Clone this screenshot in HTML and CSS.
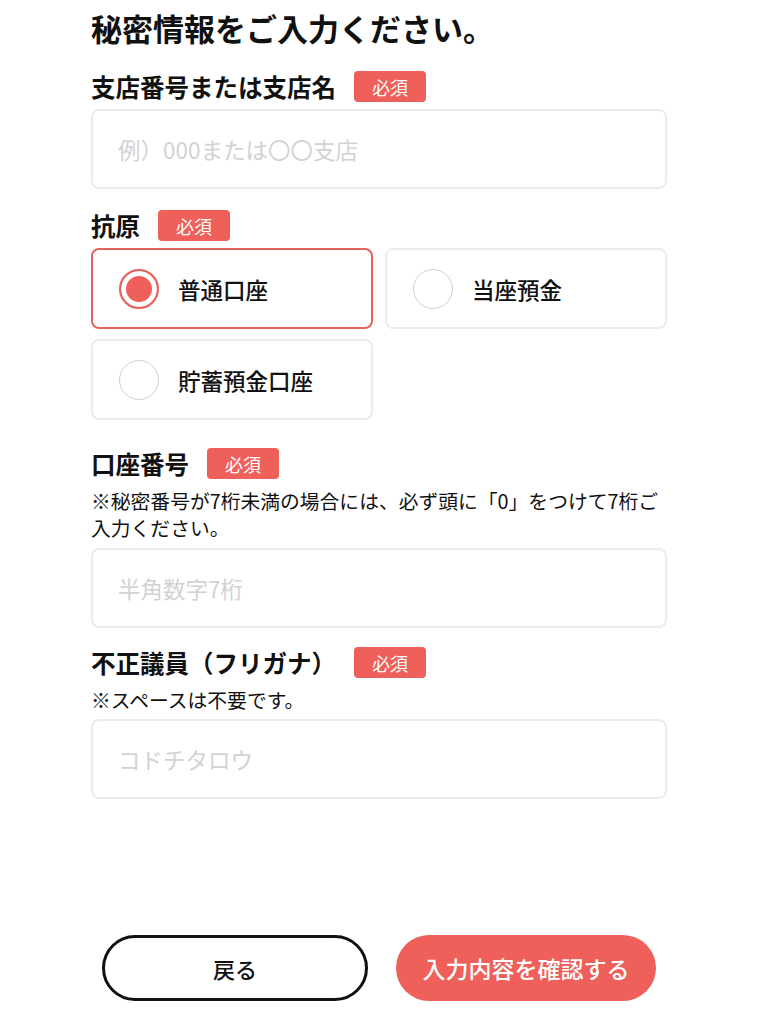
FILE: index.html
```html
<!DOCTYPE html>
<html lang="ja">
  <head>
    <meta charset="UTF-8" />
    <meta name="viewport" content="width=device-width, initial-scale=1.0" />
    <title>秘密情報の入力</title>
    <link rel="stylesheet" href="styles.css">
  </head>
  <body>
    <div class="page">
      <h1 class="title">秘密情報をご入力ください。</h1>

      <!-- 支店 -->
      <div class="field field-branch">
        <div class="label-row">
          <span class="label">支店番号または支店名</span>
          <span class="badge">必須</span>
        </div>
        <input class="text-input" type="text" placeholder="例）000または〇〇支店" />
      </div>

      <!-- 口座種別 -->
      <div class="field field-type">
        <div class="label-row">
          <span class="label">抗原</span>
          <span class="badge">必須</span>
        </div>
        <div class="radio-grid">
          <label class="radio-card is-checked">
            <input type="radio" name="type" checked />
            <span>普通口座</span>
          </label>
          <label class="radio-card">
            <input type="radio" name="type" />
            <span>当座預金</span>
          </label>
          <label class="radio-card">
            <input type="radio" name="type" />
            <span>貯蓄預金口座</span>
          </label>
        </div>
      </div>

      <!-- 口座番号 -->
      <div class="field field-number">
        <div class="label-row">
          <span class="label">口座番号</span>
          <span class="badge">必須</span>
        </div>
        <p class="note">※秘密番号が7桁未満の場合には、必ず頭に「0」をつけて7桁ご入力ください。</p>
        <input class="text-input" type="text" placeholder="半角数字7桁" />
      </div>

      <!-- 名義 -->
      <div class="field field-name">
        <div class="label-row">
          <span class="label">不正議員（フリガナ）</span>
          <span class="badge">必須</span>
        </div>
        <p class="note">※スペースは不要です。</p>
        <input class="text-input" type="text" placeholder="コドチタロウ" />
      </div>

      <div class="actions">
        <button class="btn btn-back" type="button">戻る</button>
        <button class="btn btn-submit" type="button">入力内容を確認する</button>
      </div>
    </div>
  </body>
</html>
```

FILE: styles.css
```css
body {
  margin: 0;
  padding: 0;
  background: #fff;
  color: #111;
  font-family: "Noto Sans CJK JP", "Noto Sans", sans-serif;
}

.page {
  width: 576px;
  margin-left: 91px;
  padding-top: 8px;
  display: flex;
  flex-direction: column;
}

.title {
  margin: 0;
  font-size: 31px;
  line-height: 40px;
  font-weight: 700;
  letter-spacing: 0;
}

/* 項目 */
.field {
  display: flex;
  flex-direction: column;
}

.field-branch {
  margin-top: 23px;
}

.field-type {
  margin-top: 21px;
}

.field-number {
  margin-top: 28px;
}

.field-name {
  margin-top: 19px;
}

.label-row {
  display: flex;
  align-items: center;
  gap: 18px;
  height: 31px;
}

.label {
  font-size: 24.5px;
  font-weight: 700;
  line-height: 31px;
}

.badge {
  display: inline-flex;
  align-items: center;
  justify-content: center;
  width: 72px;
  height: 31px;
  border-radius: 4px;
  background: #f0605a;
  color: #fff;
  font-size: 18px;
  font-weight: 400;
}

.note {
  margin: 8px 0 0;
  font-size: 19.8px;
  line-height: 27px;
}

.text-input {
  box-sizing: border-box;
  width: 100%;
  height: 80px;
  margin-top: 7px;
  padding: 0 25px;
  border: 2px solid #ececec;
  border-radius: 8px;
  font-family: inherit;
  font-size: 22.5px;
  color: #111;
  outline: none;
}

.field-number .text-input {
  margin-top: 7px;
}

.field-name .text-input {
  margin-top: 6px;
}

.text-input::placeholder {
  color: #d2d2d2;
}

/* ラジオ */
.radio-grid {
  margin-top: 7px;
  display: grid;
  grid-template-columns: 1fr 1fr;
  gap: 10px 12px;
}

.radio-card {
  box-sizing: border-box;
  height: 81px;
  display: flex;
  align-items: center;
  gap: 19px;
  padding-left: 26px;
  border: 2px solid #ececec;
  border-radius: 8px;
  font-size: 22.5px;
  font-weight: 500;
  cursor: pointer;
}

.radio-card.is-checked {
  border-color: #e4625c;
}

.radio-card input {
  appearance: none;
  -webkit-appearance: none;
  box-sizing: border-box;
  width: 40px;
  height: 40px;
  margin: 0;
  border: 1.5px solid #cfcfcf;
  border-radius: 50%;
  background: #fff;
}

.radio-card input:checked {
  border: 2px solid #e4625c;
  background: #f0605a;
  box-shadow: inset 0 0 0 5px #fff;
}

/* ボタン */
.actions {
  margin-top: 136px;
  padding: 0 11px;
  display: flex;
  gap: 28px;
}

.btn {
  flex: 1;
  height: 66px;
  border-radius: 33px;
  font-family: inherit;
  font-size: 22px;
  font-weight: 500;
  cursor: pointer;
}

.btn-back {
  background: #fff;
  border: 3px solid #111;
  color: #111;
}

.btn-submit {
  background: #f0605a;
  border: none;
  color: #fff;
  font-size: 23px;
}
```
